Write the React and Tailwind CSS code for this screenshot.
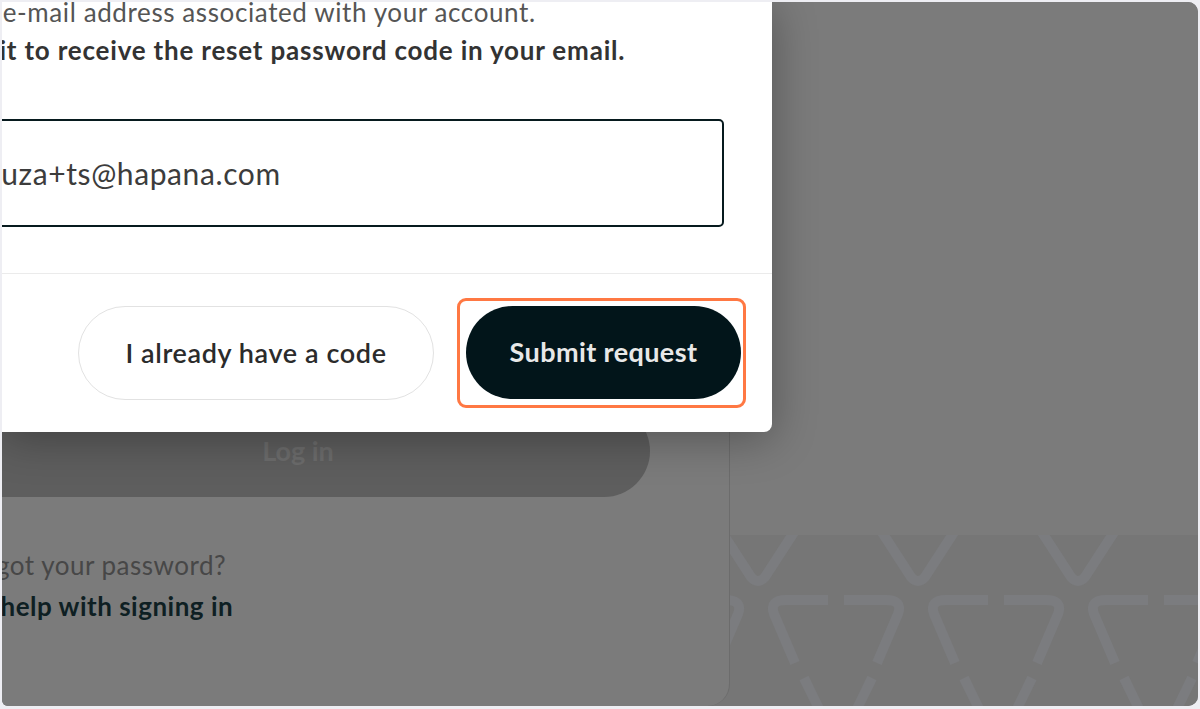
import React from "react";

const FONT = { fontFamily: "Lato, 'Noto Sans', sans-serif" };

// ─── Background chevron pattern (decorative) ─────────────────────────────────
function ChevronPattern() {
  const vs = [28, 188, 348, 508];
  const pairs = [-54, 106, 266, 426];
  return (
    <svg width="470" height="175" className="block" fill="none" stroke="#7b7c7f" strokeWidth="10">
      {vs.map((cx) => (
        <path key={"v" + cx} d={`M${cx - 42} -12 L${cx - 7} 42 Q${cx} 50 ${cx + 7} 42 L${cx + 42} -12`} />
      ))}
      {pairs.map((c) => (
        <g key={"p" + c}>
          <path d={`M${c - 8} 65 L${c - 50} 65 Q${c - 67} 65 ${c - 62} 79 L${c - 41} 128`} />
          <path d={`M${c + 8} 65 L${c + 50} 65 Q${c + 67} 65 ${c + 62} 79 L${c + 41} 128`} />
          <path d={`M${c - 32} 143 L${c - 14} 180`} />
          <path d={`M${c + 36} 143 L${c + 18} 180`} />
        </g>
      ))}
    </svg>
  );
}

// ─── Reset password dialog ───────────────────────────────────────────────────
function ResetDialog() {
  return (
    <div className="absolute left-0 top-0 w-[770px] h-[430px] bg-white rounded-br-[8px] shadow-[0_6px_45px_rgba(0,0,0,0.32)] overflow-hidden flex flex-col">
      <div className="text-[26px] leading-[38px] mt-[-9px] whitespace-nowrap">
        <p className="text-[#555555] tracking-[0.6px] -ml-[117px]">Enter the e-mail address associated with your account.</p>
        <p className="text-[#333333] font-bold tracking-[0.8px] -ml-[71px]">Submit to receive the reset password code in your email.</p>
      </div>

      <div className="-ml-[40px] mt-[50px] w-[762px] h-[108px] border-2 border-[#071a1e] rounded-[5px] flex items-center pl-[6px]">
        <span className="text-[30px] tracking-[0.6px] text-[#3c3c3c] whitespace-nowrap">souza+ts@hapana.com</span>
      </div>

      <div className="mt-[46px] h-px bg-[#ebebeb]" />

      <div className="flex justify-end gap-[32px] pr-[31px] pt-[32px]">
        <button className="w-[356px] h-[94px] rounded-full border border-[#e2e2e2] bg-white text-[27px] tracking-[0.6px] font-semibold text-[#2b2b2b]">
          I already have a code
        </button>
        <div className="relative">
          <button className="w-[275px] h-[93px] rounded-full bg-[#02151a] text-[27px] tracking-[0.4px] font-bold text-[#e8e8e8]">
            Submit request
          </button>
          <div className="absolute -left-[9px] -right-[5px] -top-[8px] -bottom-[8px] border-[3px] border-[#ff7843] rounded-[9px] pointer-events-none" />
        </div>
      </div>
    </div>
  );
}

export default function App() {
  return (
    <div className="w-[1200px] h-[709px] bg-[#eeeef3] pt-[2px] pl-[2px] pr-[2px] pb-[3px]" style={FONT}>
      <div className="relative h-full flex bg-[#767676] rounded-tr-[10px] rounded-br-[10px] rounded-bl-[6px] overflow-hidden">
        {/* login card behind the dialog */}
        <div className="w-[728px] shrink-0 bg-[#7b7b7b] border-r border-[#6c6c6c] rounded-br-[22px] overflow-hidden flex flex-col">
          <div className="mt-[403px] -ml-[56px] w-[704px] h-[92px] rounded-full bg-[#5e5e5e] flex items-center justify-center">
            <span className="text-[27px] font-bold text-[#6c6c6c]">Log in</span>
          </div>
          <div className="mt-[48px] -ml-[42px] text-[26px] leading-[41px] tracking-[0.5px] whitespace-nowrap">
            <p className="text-[#474747] -ml-[3px]">Forgot your password?</p>
            <p className="text-[#0e1f23] font-bold -ml-[10px]">Get help with signing in</p>
          </div>
        </div>

        {/* right side panel */}
        <div className="flex-1 flex flex-col">
          <div className="h-[533px] bg-[#7b7b7b]" />
          <div className="flex-1 bg-[#767676] overflow-hidden">
            <ChevronPattern />
          </div>
        </div>

        <ResetDialog />
      </div>
    </div>
  );
}
